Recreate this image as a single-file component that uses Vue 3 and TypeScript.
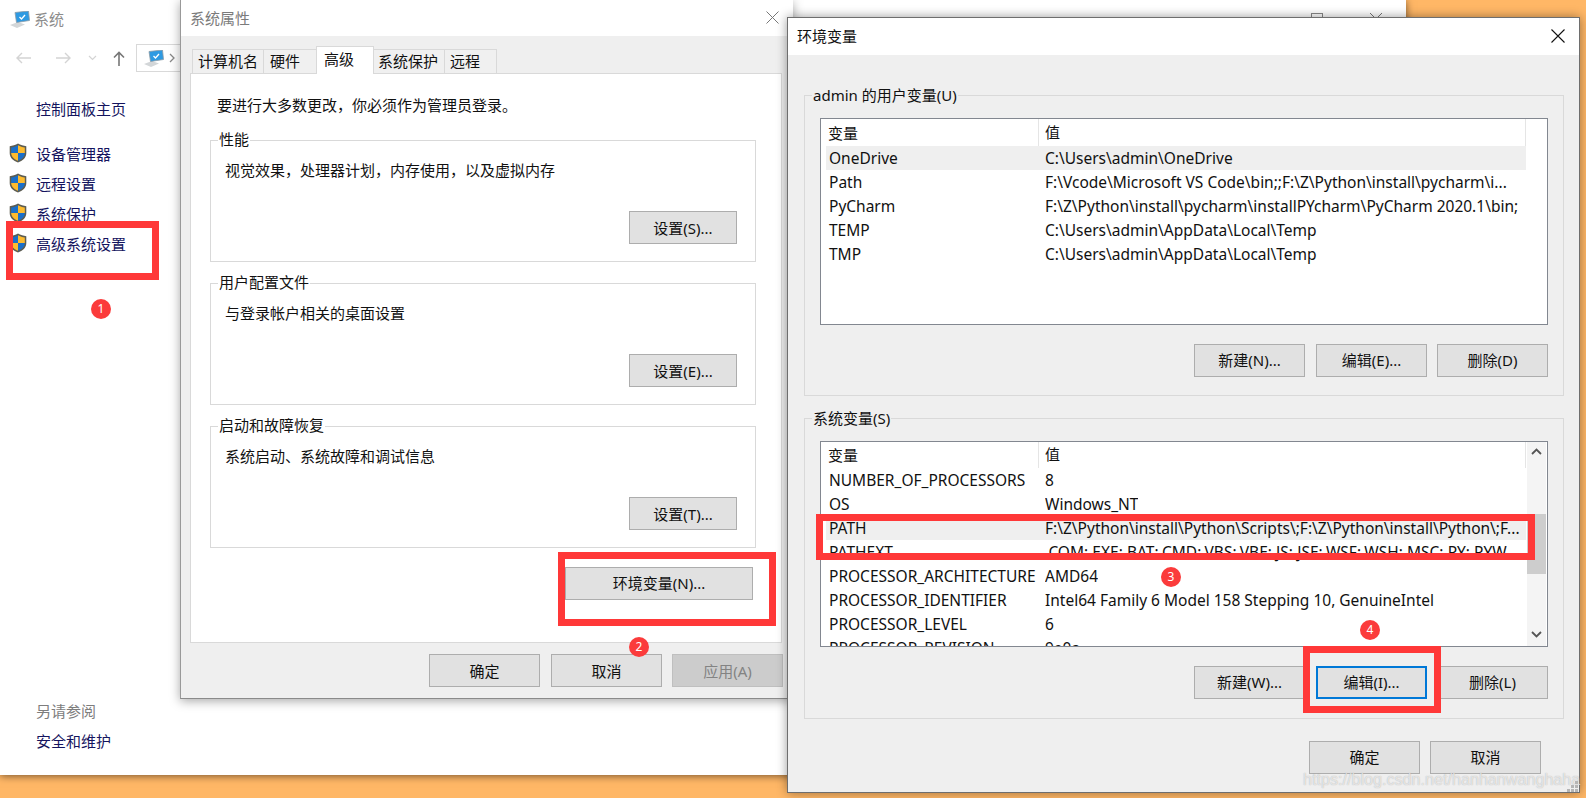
<script setup lang="ts">
interface Row { name: string; value: string; active?: boolean }
const userRows: Row[] = [
  { name: 'OneDrive', value: 'C:\\Users\\admin\\OneDrive', active: true },
  { name: 'Path', value: 'F:\\Vcode\\Microsoft VS Code\\bin;;F:\\Z\\Python\\install\\pycharm\\i...' },
  { name: 'PyCharm', value: 'F:\\Z\\Python\\install\\pycharm\\installPYcharm\\PyCharm 2020.1\\bin;' },
  { name: 'TEMP', value: 'C:\\Users\\admin\\AppData\\Local\\Temp' },
  { name: 'TMP', value: 'C:\\Users\\admin\\AppData\\Local\\Temp' },
]
const sysRows: Row[] = [
  { name: 'NUMBER_OF_PROCESSORS', value: '8' },
  { name: 'OS', value: 'Windows_NT' },
  { name: 'PATH', value: 'F:\\Z\\Python\\install\\Python\\Scripts\\;F:\\Z\\Python\\install\\Python\\;F...', active: true },
  { name: 'PATHEXT', value: '.COM;.EXE;.BAT;.CMD;.VBS;.VBE;.JS;.JSE;.WSF;.WSH;.MSC;.PY;.PYW' },
  { name: 'PROCESSOR_ARCHITECTURE', value: 'AMD64' },
  { name: 'PROCESSOR_IDENTIFIER', value: 'Intel64 Family 6 Model 158 Stepping 10, GenuineIntel' },
  { name: 'PROCESSOR_LEVEL', value: '6' },
  { name: 'PROCESSOR_REVISION', value: '9e0a' },
]
const shieldLinks = ['设备管理器', '远程设置', '系统保护', '高级系统设置']
const tabs = [
  { label: '计算机名', cls: 'tab-a' },
  { label: '硬件', cls: 'tab-b' },
  { label: '高级', cls: 'tab-c active' },
  { label: '系统保护', cls: 'tab-d' },
  { label: '远程', cls: 'tab-e' },
]
const groups = [
  { title: '性能', desc: '视觉效果，处理器计划，内存使用，以及虚拟内存', btn: '设置(S)...' },
  { title: '用户配置文件', desc: '与登录帐户相关的桌面设置', btn: '设置(E)...' },
  { title: '启动和故障恢复', desc: '系统启动、系统故障和调试信息', btn: '设置(T)...' },
]
const marks = ['m1', 'm2', 'm3', 'm4']
const grip = [[8, 0], [4, 4], [8, 4], [0, 8], [4, 8], [8, 8]]
</script>

<template>
  <div class="desktop">
    <!-- system window -->
    <section class="win sys">
      <header class="sys-title">
        <svg class="pc" width="20" height="17" viewBox="0 0 20 17">
          <path d="M0 14l8-3 7 2.500-8 3.500z" fill="#d3d6d8" />
          <path d="M5 1.500L18.500 0l1 9.500-13 2z" fill="#2e9ae2" stroke="#8d9ba5" stroke-width=".8" />
          <path d="M9.500 6l2 2 3.500-4" fill="none" stroke="#fff" stroke-width="1.300" />
        </svg>
        <span>系统</span>
        <i class="ctl-min"></i>
        <i class="ctl-max"></i>
        <svg class="ctl-x" width="12" height="12" viewBox="0 0 12 12"><path d="M0 0l12 12M12 0L0 12" stroke="#777" /></svg>
      </header>
      <nav class="sys-nav">
        <svg class="nav-back" width="16" height="12" viewBox="0 0 16 12"><path d="M15 6H1M6 1L1 6l5 5" fill="none" stroke="#d4d4d4" stroke-width="1.400" /></svg>
        <svg class="nav-fwd" width="16" height="12" viewBox="0 0 16 12"><path d="M1 6h14M10 1l5 5-5 5" fill="none" stroke="#d4d4d4" stroke-width="1.400" /></svg>
        <svg class="nav-down" width="9" height="6" viewBox="0 0 9 6"><path d="M1 1l3.500 3.500L8 1" fill="none" stroke="#d4d4d4" stroke-width="1.200" /></svg>
        <svg class="nav-up" width="12" height="15" viewBox="0 0 12 15"><path d="M6 15V1.500M1 6.500l5-5 5 5" fill="none" stroke="#777" stroke-width="1.600" /></svg>
        <div class="addr">
          <svg width="20" height="17" viewBox="0 0 20 17">
            <path d="M0 14l8-3 7 2.500-8 3.500z" fill="#d3d6d8" />
            <path d="M5 1.500L18.500 0l1 9.500-13 2z" fill="#2e9ae2" stroke="#8d9ba5" stroke-width=".8" />
            <path d="M9.500 6l2 2 3.500-4" fill="none" stroke="#fff" stroke-width="1.300" />
          </svg>
          <svg class="addr-chev" width="6" height="10" viewBox="0 0 6 10"><path d="M1 1l4 4-4 4" fill="none" stroke="#888" stroke-width="1.300" /></svg>
        </div>
      </nav>
      <aside class="side">
        <a class="home">控制面板主页</a>
        <a v-for="l in shieldLinks" :key="l" class="slink">
          <svg class="shield" width="18" height="20" viewBox="0 0 18 20">
            <path d="M9 .6C6.500 2.300 3.500 3 .7 3.200v7c0 4.500 3.600 7.500 8.300 9.300 4.700-1.800 8.300-4.800 8.300-9.300v-7C14.500 3 11.500 2.300 9 .6z" fill="#5c5c52" />
            <path d="M9 2.200C7 3.500 4.500 4.200 2.200 4.400V10H9z" fill="#1a6fc9" />
            <path d="M9 2.200c2 1.300 4.500 2 6.800 2.200V10H9z" fill="#fdbb2f" />
            <path d="M2.200 10c0 3.800 3 6.200 6.800 7.800V10z" fill="#fdbb2f" />
            <path d="M15.800 10c0 3.800-3 6.200-6.800 7.800V10z" fill="#1a6fc9" />
          </svg>
          <span>{{ l }}</span>
        </a>
        <div class="see">另请参阅</div>
        <a class="home sec">安全和维护</a>
      </aside>
    </section>

    <!-- system properties -->
    <section class="win props">
      <header class="props-title">
        <span>系统属性</span>
        <svg width="13" height="13" viewBox="0 0 13 13"><path d="M.5.500l12 12M12.500.500l-12 12" stroke="#777" /></svg>
      </header>
      <div class="props-body">
        <div class="tabs">
          <span v-for="t in tabs" :key="t.label" class="tab" :class="t.cls">{{ t.label }}</span>
        </div>
        <div class="panel">
          <p class="notice">要进行大多数更改，你必须作为管理员登录。</p>
          <div v-for="g in groups" :key="g.title" class="pgroup">
            <span class="legend">{{ g.title }}</span>
            <p class="pdesc">{{ g.desc }}</p>
            <button class="btn pbtn">{{ g.btn }}</button>
          </div>
          <button class="btn envbtn">环境变量(N)...</button>
        </div>
        <footer class="props-foot">
          <button class="btn wide">确定</button>
          <button class="btn wide">取消</button>
          <button class="btn wide off">应用(A)</button>
        </footer>
      </div>
    </section>

    <!-- environment variables -->
    <section class="win env">
      <header class="env-title">
        <span>环境变量</span>
        <svg width="14" height="14" viewBox="0 0 14 14"><path d="M.5.500l13 13M13.500.500l-13 13" stroke="#111" stroke-width="1.100" /></svg>
      </header>
      <div class="env-body">
        <div class="egroup">
          <span class="legend">admin 的用户变量(U)</span>
          <div class="vlist">
            <div class="vrows">
              <div class="vhead"><span class="hname">变量</span><span class="hval">值</span></div>
              <div v-for="r in userRows" :key="r.name" class="vrow" :class="{ on: r.active }">
                <span class="vname">{{ r.name }}</span><span class="vval">{{ r.value }}</span>
              </div>
            </div>
          </div>
          <div class="ebtns">
            <button class="btn wide">新建(N)...</button>
            <button class="btn wide">编辑(E)...</button>
            <button class="btn wide">删除(D)</button>
          </div>
        </div>
        <div class="egroup second">
          <span class="legend">系统变量(S)</span>
          <div class="vlist">
            <div class="vrows">
              <div class="vhead"><span class="hname">变量</span><span class="hval">值</span></div>
              <div v-for="r in sysRows" :key="r.name" class="vrow" :class="{ on: r.active }">
                <span class="vname">{{ r.name }}</span><span class="vval">{{ r.value }}</span>
              </div>
            </div>
            <div class="sbar">
              <svg width="19" height="20" viewBox="0 0 19 20"><path d="M5 12l4.500-4.500L14 12" fill="none" stroke="#555" stroke-width="1.800" /></svg>
              <div class="thumb"></div>
              <svg class="sdown" width="19" height="20" viewBox="0 0 19 20"><path d="M5 8l4.500 4.500L14 8" fill="none" stroke="#555" stroke-width="1.800" /></svg>
            </div>
          </div>
          <div class="ebtns">
            <button class="btn wide">新建(W)...</button>
            <button class="btn wide focus">编辑(I)...</button>
            <button class="btn wide">删除(L)</button>
          </div>
        </div>
        <footer class="env-foot">
          <button class="btn wide">确定</button>
          <button class="btn wide">取消</button>
        </footer>
      </div>
    </section>

    <!-- annotations -->
    <div class="redbox r1"></div>
    <div class="redbox r2"></div>
    <div class="redbox r3"></div>
    <div class="redbox r4"></div>
    <span v-for="(m, i) in marks" :key="m" class="badge" :class="m">{{ i + 1 }}</span>

    <span class="wm">https://blog.csdn.net/hanhanwanghaha</span>
    <svg class="grip" width="11" height="11" viewBox="0 0 11 11">
      <rect v-for="(p, i) in grip" :key="i" :x="p[0]" :y="p[1]" width="3" height="3" fill="#b5b5b5" />
    </svg>
  </div>
</template>

<style>
html, body { margin: 0; background: #ffb766; }
</style>

<style scoped>
* { box-sizing: border-box; }
p { margin: 0; }
.desktop {
  position: relative;
  width: 1586px;
  height: 798px;
  overflow: hidden;
  background: #ffb766;
  font-family: "Noto Sans", "Noto Sans CJK SC", sans-serif;
  font-size: 15px;
  color: #111;
}
.win { position: absolute; display: flex; flex-direction: column; }

/* system window */
.sys {
  left: 0; top: 0; width: 1406px; height: 775px;
  background: #fff;
  box-shadow: 0 1px 8px rgba(0, 0, 0, .55);
}
.sys-title { height: 38px; display: flex; align-items: center; padding: 0 24px 0 10px; color: #8c8c8c; flex: none; }
.sys-title span { margin: 0 0 2px 4px; }
.ctl-min { width: 12px; height: 1px; background: #555; margin-left: auto; }
.ctl-max { width: 12px; height: 12px; border: 1px solid #888; margin-left: 40px; }
.ctl-x { margin-left: 47px; }
.sys-nav { height: 28px; margin-top: 6px; display: flex; align-items: center; flex: none; }
.nav-back { margin-left: 16px; }
.nav-fwd { margin-left: 23px; }
.nav-down { margin-left: 17px; }
.nav-up { margin-left: 16px; }
.addr {
  margin-left: 11px; width: 120px; height: 28px;
  border: 1px solid #d9d9d9; display: flex; align-items: center; padding-left: 7px;
}
.addr-chev { margin-left: 5px; }
.side { flex: 1; display: flex; flex-direction: column; padding: 22px 0 19px 9px; color: #14145e; }
.home { height: 30px; line-height: 30px; padding-left: 27px; margin-bottom: 14px; }
.slink { height: 30px; display: flex; align-items: center; gap: 9px; }
.shield { flex: none; }
.see { margin-top: auto; height: 30px; line-height: 30px; padding-left: 27px; color: #7d7d7d; }
.home.sec { margin-bottom: 0; }

/* properties */
.props {
  left: 180px; top: 0; width: 613px; height: 699px;
  border-left: 1px solid #999; border-bottom: 1px solid #8a8a8a;
  background: #efefef;
  box-shadow: 0 2px 10px rgba(0, 0, 0, .35);
}
.props-title {
  height: 36px; background: #fff; flex: none; display: flex; align-items: center;
  justify-content: space-between; padding: 0 14px 2px 9px; color: #7b7b7b;
}
.props-body { flex: 1; display: flex; flex-direction: column; }
.tabs { height: 38px; padding: 13px 0 0 11px; display: flex; margin-bottom: -1px; position: relative; z-index: 1; }
.tab {
  height: 24px; line-height: 22px; border: 1px solid #d9d9d9; border-bottom: 0; margin-right: -1px;
  background: #f0f0f0; padding-left: 5px; white-space: nowrap;
}
.tab-a { width: 72px; }
.tab-b { width: 54px; padding-left: 6px; }
.tab-c { width: 58px; }
.tab-d { width: 72px; padding-left: 4px; }
.tab-e { width: 53px; }
.tab.active { height: 28px; margin-top: -3px; background: #fff; line-height: 25px; padding-left: 7px; z-index: 1; }
.panel {
  width: 592px; height: 570px; margin-left: 9px; background: #fff; border: 1px solid #d9d9d9;
  padding: 20px 24px 0 19px; display: flex; flex-direction: column;
}
.notice { height: 22px; line-height: 22px; padding-left: 7px; }
.pgroup {
  position: relative; width: 546px; height: 122px; margin-bottom: 21px; margin-top: 0;
  border: 1px solid #d9d9d9; display: flex; flex-direction: column; padding: 18px 18px 17px 14px;
}
.notice + .pgroup { margin-top: 24px; }
.legend { position: absolute; left: 7px; top: -12px; background: inherit; padding: 0 1px; line-height: 20px; }
.pgroup .legend { background: #fff; }
.pdesc { line-height: 22px; }
.btn {
  font: inherit; color: #111; background: #e1e1e1;
  border: 1px solid #adadad; padding: 0; height: 33px;
}
.pbtn { width: 108px; margin-top: auto; align-self: flex-end; }
.envbtn { width: 188px; align-self: flex-end; margin: -2px 4px 0 0; padding-bottom: 2px; }
.wide { width: 111px; }
.off { background: #ccc; border-color: #bfbfbf; color: #838383; }
.props-foot { display: flex; gap: 11px; padding: 11px 0 0 248px; }
.props-foot .off { margin-left: -1px; }

/* env */
.env {
  left: 787px; top: 17px; width: 793px; height: 776px;
  border: 1px solid #6e6e6e; background: #efefef;
  box-shadow: 0 0 10px rgba(0, 0, 0, .4);
}
.env-title {
  height: 37px; flex: none; background: #fff; display: flex; align-items: center;
  justify-content: space-between; padding: 0 14px 2px 9px;
}
.env-body { flex: 1; padding: 40px 15px 0 16px; display: flex; flex-direction: column; }
.env-body .btn { padding-bottom: 2px; }
.egroup {
  position: relative; height: 301px; border: 1px solid #d9d9d9; padding: 22px 15px 0 15px; background: #efefef;
}
.egroup.second { margin-top: 22px; }
.egroup .legend { background: #efefef; top: -11px; }
.vlist {
  height: 207px; border: 1px solid #828790; background: #fff; display: flex; padding-left: 5px; overflow: hidden;
}
.second .vlist { padding-right: 1px; height: 206px; }
.vrows { width: 700px; flex: none; }
.vhead { height: 27px; display: flex; align-items: center; }
.hname { width: 212px; padding-left: 2px; }
.hval { flex: 1; height: 100%; border-left: 1px solid #e5e5e5; border-right: 1px solid #e5e5e5; padding-left: 6px; line-height: 27px; }
.second .vhead { height: 26px; }
.second .vhead .hval { line-height: 25px; }
.second .vhead .hname { margin-bottom: 1px; }
.vrow { height: 24px; line-height: 25px; display: flex; white-space: nowrap; font-size: 15.500px; }
.vrow.on { background: #efefef; }
.vname { width: 219px; padding-left: 3px; flex: none; }
.vval { overflow: hidden; }
.sbar { width: 19px; margin-left: 1px; background: #f4f4f4; display: flex; flex-direction: column; padding-bottom: 2px; }
.thumb { height: 60px; margin-top: 52px; background: #cdcdcd; }
.sdown { margin-top: auto; }
.ebtns { display: flex; justify-content: flex-end; gap: 10px; margin-top: 19px; }
.ebtns .btn:first-child { margin-right: 1px; }
.focus { border: 2px solid #0078d7; }
.env-foot { display: flex; justify-content: flex-end; gap: 10px; margin-top: 22px; padding-right: 23px; }

/* annotations */
.redbox { position: absolute; border: 7px solid #ff3838; }
.r1 { left: 6px; top: 221px; width: 153px; height: 59px; }
.r2 { left: 558px; top: 552px; width: 218px; height: 74px; }
.r3 { left: 816px; top: 514px; width: 719px; height: 46px; }
.r4 { left: 1303px; top: 646px; width: 138px; height: 67px; }
.badge {
  position: absolute; width: 20px; height: 20px; border-radius: 50%; background: #fb3b3b; color: #fff;
  font-size: 12px; line-height: 20px; text-align: center;
}
.m1 { left: 91px; top: 299px; }
.m2 { left: 629px; top: 637px; }
.m3 { left: 1161px; top: 567px; }
.m4 { left: 1360px; top: 620px; }
.wm {
  position: absolute; left: 1303px; top: 769px; font-family: "Liberation Sans", sans-serif; font-size: 16.150px;
  line-height: 20px; color: rgba(255, 255, 255, .65); text-shadow: 0 0 1px rgba(120, 120, 120, .6);
  white-space: nowrap;
}
.grip { position: absolute; left: 1567px; top: 781px; }
</style>
